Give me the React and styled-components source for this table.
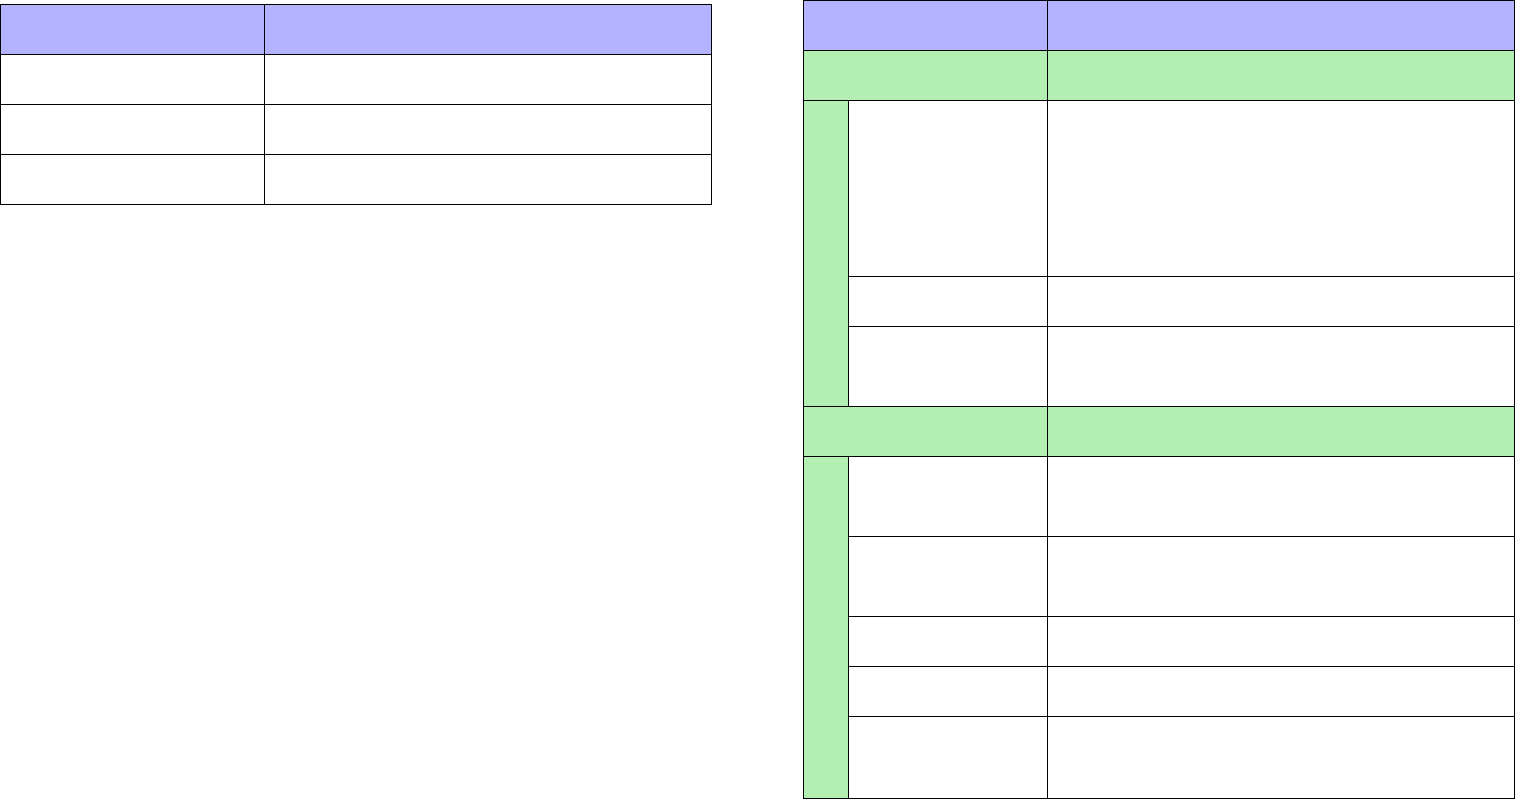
import React from "react"
import styled, { createGlobalStyle } from "styled-components"

const GlobalStyle = createGlobalStyle`
  * { box-sizing: border-box; }
  body {
    margin: 0;
    background: #fff;
    font-family: "Liberation Sans", Arial, sans-serif;
    font-size: 14px;
  }
`

const LINE = "1px solid #000"
const HEAD = "#b3b3ff"
const GROUP = "#b3eeb3"

const Page = styled.div`
  display: flex;
  align-items: flex-start;
  gap: 91px;
`

const Table = styled.div`
  border-top: ${LINE};
  border-left: ${LINE};
  margin-top: ${props => props.offset || 0}px;
`

const Row = styled.div`
  display: grid;
  grid-template-columns: ${props => props.cols};
  background: ${props => props.bg || "#fff"};
`

const Cell = styled.div`
  height: ${props => props.h || 50}px;
  border-right: ${LINE};
  border-bottom: ${LINE};
  border-left: ${props => props.edge ? LINE : "none"};
  padding: 6px 10px;
`

const Group = styled.div`
  background: ${GROUP};
`

const Body = styled.div`
  display: flex;
`

const Strip = styled.div`
  width: 44px;
  flex: none;
  border-bottom: ${LINE};
`

const Children = styled.div`
  flex: 1;
  background: #fff;
`

const leftRows = [50, 50, 50]

const groups = [
  { children: [176, 50, 80] },
  { children: [80, 80, 50, 50, 82] }
]

function App() {
  return (
    <>
      <GlobalStyle />
      <Page>
        <Table offset={4}>
          <Row cols="264px 447px" bg={HEAD}>
            <Cell />
            <Cell />
          </Row>
          {leftRows.map((h, i) => (
            <Row key={i} cols="264px 447px">
              <Cell h={h} />
              <Cell h={h} />
            </Row>
          ))}
        </Table>

        <Table>
          <Row cols="244px 467px" bg={HEAD}>
            <Cell />
            <Cell />
          </Row>
          {groups.map((g, gi) => (
            <Group key={gi}>
              <Row cols="244px 467px" bg={GROUP}>
                <Cell />
                <Cell />
              </Row>
              <Body>
                <Strip />
                <Children>
                  {g.children.map((h, i) => (
                    <Row key={i} cols="200px 467px">
                      <Cell h={h} edge />
                      <Cell h={h} />
                    </Row>
                  ))}
                </Children>
              </Body>
            </Group>
          ))}
        </Table>
      </Page>
    </>
  )
}

export default App
